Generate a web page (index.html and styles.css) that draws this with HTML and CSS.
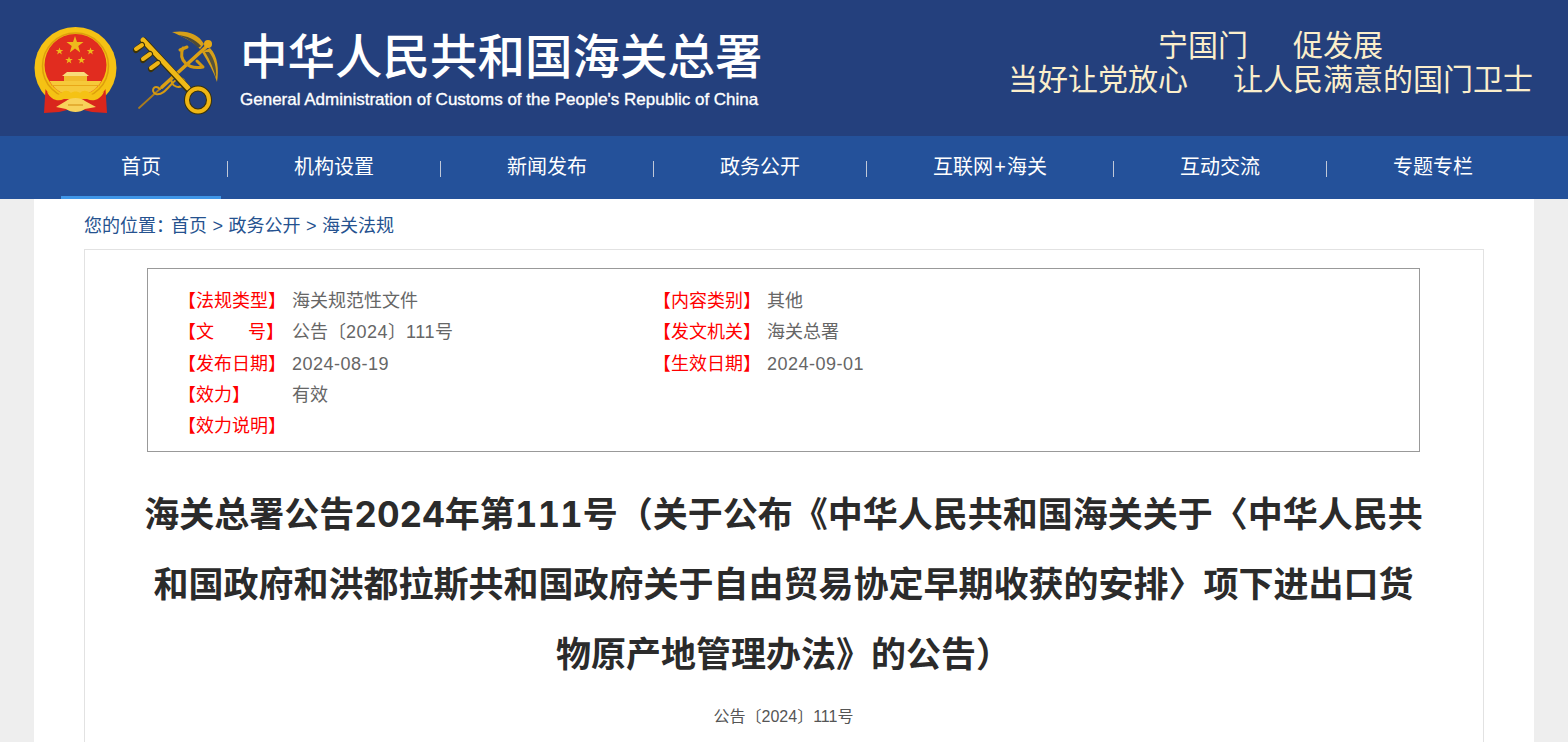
FILE: index.html
```html
<!DOCTYPE html>
<html lang="zh-CN">
<head>
    <meta charset="UTF-8">
    <meta name="viewport" content="width=device-width, initial-scale=1.0">
    <title>海关总署公告2024年第111号</title>
    <link rel="stylesheet" href="styles.css">
</head>
<body>
<div class="page">

    <header class="top">
        <svg class="emblem" viewBox="33 26 85 90" aria-hidden="true">
            <circle cx="75.5" cy="68" r="41" fill="#f5c214"/>
            <circle cx="75.5" cy="66" r="33" fill="none" stroke="#dd9f0c" stroke-width="1.5"/>
            <circle cx="75.5" cy="65" r="31" fill="#e12c1f"/>
            <path d="M49.5 81 H101.5 C97 89 90 93 84 95 H67 C61 93 54 89 49.5 81 Z" fill="#f6c93a"/>
            <path d="M51 85.5 H100" stroke="#e9a818" stroke-width="1"/>
            <g fill="#eeb91c">
                <polygon points="75,36 77,42 83.5,42 78.3,46 80.2,52.5 75,48.5 69.8,52.5 71.7,46 66.5,42 73,42"/>
                <polygon points="59.5,47.5 60.5,50 63.3,50 61,51.8 61.9,54.5 59.5,52.8 57.1,54.5 58,51.8 55.7,50 58.5,50"/>
                <polygon points="90.5,47.5 91.5,50 94.3,50 92,51.8 92.9,54.5 90.5,52.8 88.1,54.5 89,51.8 86.7,50 89.5,50"/>
                <polygon points="69,56.5 70,59 72.8,59 70.5,60.8 71.4,63.5 69,61.8 66.6,63.5 67.5,60.8 65.2,59 68,59"/>
                <polygon points="81.5,56.5 82.5,59 85.3,59 83,60.8 83.9,63.5 81.5,61.8 79.1,63.5 80,60.8 77.7,59 80.5,59"/>
            </g>
            <path d="M67 72 H84 L89 76 H62 Z" fill="#f8dc7a"/>
            <path d="M64 76 H87 V81 H64 Z" fill="#f1bb2c"/>
            <path d="M45.5 89 C50 96 56 99 63 98 L88 98 C95 99 101 96 105.5 89 L107 113 L92 112 L75.5 108 L59 112 L44 113 Z" fill="#d9261c"/>
            <path d="M47 92 C52 94 56 96 60 94 C64 90 68 90 71 93 C73 91 78 91 80 93 C83 90 87 90 91 94 C95 96 99 94 104 92 C100 100 93 102 87 99 L64 99 C58 102 51 100 47 92 Z" fill="#f5c214"/>
            <path d="M56 107 L66 101 C70 97 81 97 85 101 L96 107 L85 109 C80 113 71 113 66 109 Z" fill="#f8d25a"/>
            <path d="M68 105 H83" stroke="#d9981a" stroke-width="1.2"/>
        </svg>

        <svg class="badge" viewBox="130 25 95 95" aria-hidden="true">
            <g fill="none" stroke-linecap="round" stroke-linejoin="round">
                <path d="M139 108 L162 87" stroke="#a97c1e" stroke-width="1.8"/>
                <path d="M162 87 L206 47" stroke="#dca014" stroke-width="3.6"/>
                <path d="M183 48 C178 60 188 70 203 67 M180 50 L187 47 M203 67 L197 61" stroke="#d39a12" stroke-width="3"/>
                <path d="M160 89 C154 83 150 92 156 94 C164 96 170 84 176 80 C182 75 188 82 182 86 C174 90 166 80 176 72" stroke="#d49a12" stroke-width="2"/>
                <path d="M144 41 L188 89" stroke="#3b3208" stroke-width="7"/>
                <path d="M143 40 L188 88" stroke="#f0b917" stroke-width="5"/>
                <path d="M142 45 L136 50 M150 54 L143 60 M158 63 L151 69" stroke="#3b3208" stroke-width="6"/>
                <path d="M142 45 L136 49 M150 54 L143 59 M158 63 L151 68" stroke="#eeb415" stroke-width="4"/>
                <ellipse cx="198" cy="100" rx="11" ry="11.5" stroke="#3b3208" stroke-width="6"/>
                <ellipse cx="198" cy="100" rx="11" ry="11.5" stroke="#efb614" stroke-width="4"/>
            </g>
            <circle cx="208" cy="44" r="4" fill="#e6a915"/>
            <path d="M172 32 C186 30 198 33 204 44 L200 49 C193 41 183 37 172 32 Z" fill="#d7a019"/>
            <path d="M178 35 C186 38 193 42 198 48 L201 46 C195 39 187 36 178 35 Z" fill="#4c4a38"/>
            <path d="M210 48 C218 56 219 70 217 82 C214 72 208 62 202 52 Z" fill="#d7a019"/>
            <path d="M205 52 C210 60 214 70 216 78 C217 68 214 58 209 52 Z" fill="#55533e"/>
        </svg>

        <div class="brand">
            <div class="brand-cn">中华人民共和国海关总署</div>
            <div class="brand-en">General Administration of Customs of the People's Republic of China</div>
        </div>

        <div class="slogan">
            <div>宁国门<span class="slogan-gap"></span>促发展</div>
            <div>当好让党放心<span class="slogan-gap"></span>让人民满意的国门卫士</div>
        </div>
    </header>

    <nav class="nav">
        <a href="#" class="nav-item active">首页</a>
        <span class="nav-sep"></span>
        <a href="#" class="nav-item">机构设置</a>
        <span class="nav-sep"></span>
        <a href="#" class="nav-item">新闻发布</a>
        <span class="nav-sep"></span>
        <a href="#" class="nav-item">政务公开</a>
        <span class="nav-sep"></span>
        <a href="#" class="nav-item">互联网<span class="nav-plus">+</span>海关</a>
        <span class="nav-sep"></span>
        <a href="#" class="nav-item">互动交流</a>
        <span class="nav-sep"></span>
        <a href="#" class="nav-item">专题专栏</a>
    </nav>

    <main class="content">
        <div class="crumbs">
            <span class="crumbs-lead">您的位置：</span><a href="#">首页</a><span class="crumbs-sep">&gt;</span><a href="#">政务公开</a><span class="crumbs-sep">&gt;</span><a href="#">海关法规</a>
        </div>

        <div class="panel">
            <div class="info">
                <div class="info-row">
                    <div class="info-cell"><span class="info-label">【法规类型】</span><span>海关规范性文件</span></div>
                    <div class="info-cell"><span class="info-label">【内容类别】</span><span>其他</span></div>
                </div>
                <div class="info-row">
                    <div class="info-cell"><span class="info-label">【文<span class="label-gap"></span>号】</span><span>公告〔<span class="num">2024</span>〕<span class="num">111</span>号</span></div>
                    <div class="info-cell"><span class="info-label">【发文机关】</span><span>海关总署</span></div>
                </div>
                <div class="info-row">
                    <div class="info-cell"><span class="info-label">【发布日期】</span><span class="num">2024-08-19</span></div>
                    <div class="info-cell"><span class="info-label">【生效日期】</span><span class="num">2024-09-01</span></div>
                </div>
                <div class="info-row">
                    <div class="info-cell"><span class="info-label">【效力】</span><span>有效</span></div>
                </div>
                <div class="info-row">
                    <div class="info-cell"><span class="info-label">【效力说明】</span></div>
                </div>
            </div>

            <h1 class="doc-title">海关总署公告2024年第111号（关于公布《中华人民共和国海关关于〈中华人民共和国政府和洪都拉斯共和国政府关于自由贸易协定早期收获的安排〉项下进出口货物原产地管理办法》的公告）</h1>
            <p class="doc-no">公告〔2024〕111号</p>
        </div>
    </main>

</div>
</body>
</html>
```

FILE: styles.css
```css
* {
    box-sizing: border-box;
}

html, body {
    margin: 0;
    padding: 0;
}

body {
    font-family: "Liberation Sans", "Noto Sans CJK SC", sans-serif;
    background-color: #eee;
    color: #333;
}

a {
    color: inherit;
    text-decoration: none;
}

.page {
    height: 100vh;
    overflow: hidden;
}

/* header */
.top {
    display: flex;
    align-items: flex-start;
    height: 136px;
    background-color: #24407d;
}

.emblem {
    width: 85px;
    height: 90px;
    margin: 26px 0 0 33px;
    flex: none;
}

.badge {
    width: 95px;
    height: 95px;
    margin: 25px 0 0 12px;
    flex: none;
}

.brand {
    margin: 24px 0 0 15px;
    color: #fff;
}

.brand-cn {
    font-family: "Noto Sans CJK SC", sans-serif;
    font-size: 47.5px;
    font-weight: 500;
    line-height: 60px;
    white-space: nowrap;
}

.brand-en {
    font-size: 17px;
    line-height: 20px;
    margin-top: 6px;
    -webkit-text-stroke: 0.35px #fff;
    white-space: nowrap;
}

.slogan {
    margin: 29px 35px 0 auto;
    font-size: 30px;
    line-height: 34px;
    text-align: center;
    color: #fbeecb;
}

.slogan-gap {
    display: inline-block;
    width: 45px;
}

/* nav */
.nav {
    display: flex;
    align-items: center;
    height: 63px;
    padding-left: 61px;
    background-color: #24519a;
}

.nav-item {
    display: block;
    height: 62px;
    padding: 0 60px;
    font-family: "Noto Sans CJK SC", sans-serif;
    font-size: 20px;
    line-height: 58px;
    color: #fff;
    white-space: nowrap;
    margin-top: 1px;
}

.nav-item.active {
    border-bottom: 3px solid #3f96e8;
}

.nav-plus {
    margin: 0 1.5px;
}

.nav-sep {
    width: 1px;
    height: 16px;
    margin: 2px 6px 0 6px;
    background-color: #c0c8d8;
}

/* content */
.content {
    width: 1500px;
    margin-left: 34px;
    min-height: 800px;
    padding: 0 50px;
    background-color: #fff;
}

.crumbs {
    height: 50px;
    font-size: 18px;
    line-height: 54px;
    color: #25528f;
}

.crumbs-lead {
    margin-right: -3px;
}

.crumbs-sep {
    margin: 0 5.5px;
}

.panel {
    padding: 18px 63px 60px 62px;
    border: 1px solid #e2e2e2;
}

.info {
    height: 184px;
    padding: 17px 0 0 31px;
    border: 1px solid #999;
}

.info-row {
    display: flex;
    height: 31.25px;
    font-size: 18px;
    line-height: 31px;
    color: #666;
}

.info-cell {
    display: flex;
    width: 475px;
}

.info-label {
    width: 114px;
    margin-left: -1px;
    flex: none;
    color: #f00;
}

.label-gap {
    display: inline-block;
    width: 34px;
}

.num {
    letter-spacing: 0.5px;
}

.doc-title {
    margin: 27px -5px 0;
    font-family: Inter, "Noto Sans CJK SC", sans-serif;
    font-size: 35px;
    font-weight: 700;
    font-variant-numeric: tabular-nums;
    line-height: 70px;
    text-align: center;
    color: #2b2b2b;
}

.doc-no {
    margin: 16px 0 0;
    font-size: 16px;
    line-height: 24px;
    text-align: center;
    color: #555;
}
```
